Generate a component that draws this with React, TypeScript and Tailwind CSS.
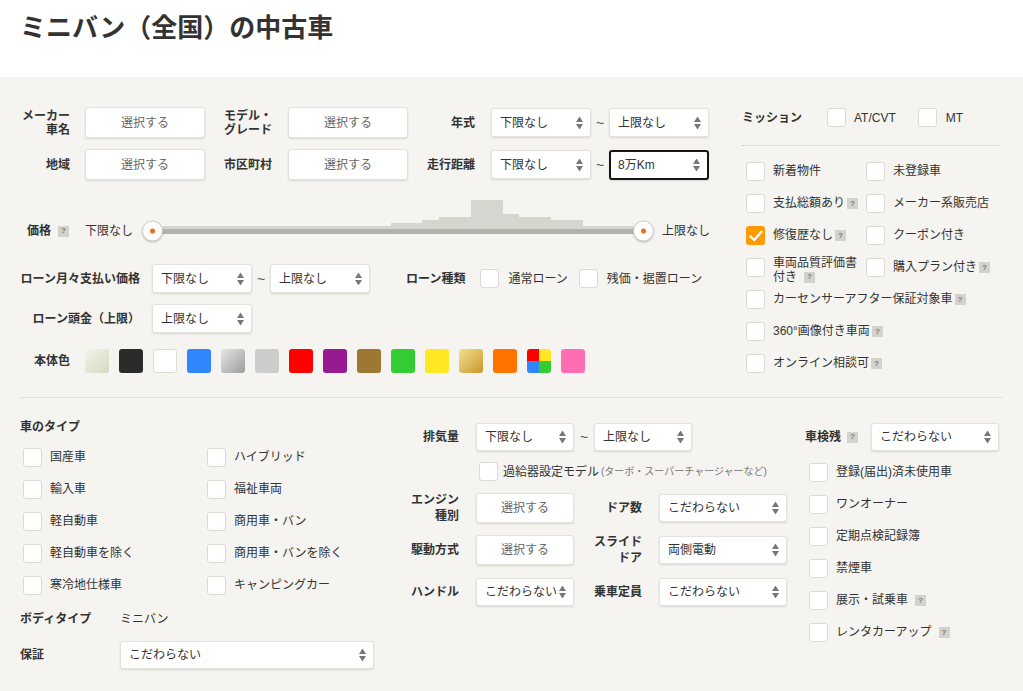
import React from "react";

const FONT = "font-['Liberation_Sans','Noto_Sans_CJK_JP',sans-serif]";

function Lbl({ children, className = "" }: { children: React.ReactNode; className?: string }) {
  return (
    <span className={"whitespace-nowrap text-[12px] font-bold text-[#333] leading-[14px] " + className}>{children}</span>
  );
}

function Q({ className = "" }: { className?: string }) {
  return (
    <span
      className={
        "inline-flex shrink-0 items-center justify-center w-[11px] h-[11px] bg-[#d4d2cd] text-[#7a7a7a] text-[8px] font-bold leading-none " +
        className
      }
    >
      ?
    </span>
  );
}

function Arrows() {
  return (
    <svg width="7" height="13" viewBox="0 0 7 13" className="absolute right-[7px] top-1/2 -translate-y-1/2">
      <path d="M0 5.5L3.5 0L7 5.5Z M0 7.5L7 7.5L3.5 13Z" fill="#777" />
    </svg>
  );
}

function Select({ text, className = "", focus = false }: { text: string; className?: string; focus?: boolean }) {
  return (
    <div
      className={
        "relative shrink-0 flex items-center bg-white rounded-[3px] text-[12px] text-[#333] leading-none shadow-[0_1px_2px_rgba(0,0,0,0.13)] " +
        (focus ? "border-2 border-[#161616] pl-[7px] " : "border border-[#e4e2dd] pl-[8px] ") +
        className
      }
    >
      <span className="whitespace-nowrap">{text}</span>
      <Arrows />
    </div>
  );
}

function Btn({ className = "" }: { className?: string }) {
  return (
    <div
      className={
        "shrink-0 flex items-center justify-center bg-white rounded-[3px] border border-[#e4e2dd] shadow-[0_1px_2px_rgba(0,0,0,0.12)] text-[12px] text-[#666] " +
        className
      }
    >
      選択する
    </div>
  );
}

function Box({ className = "", checked = false }: { className?: string; checked?: boolean }) {
  if (checked) {
    return (
      <span className={"shrink-0 w-[19px] h-[19px] rounded-[3px] bg-[#ff9a00] flex items-center justify-center " + className}>
        <svg width="14" height="12" viewBox="0 0 14 12">
          <path d="M1.5 6.5L5.2 10L12.5 1.8" fill="none" stroke="#fff" strokeWidth="2.4" strokeLinecap="round" strokeLinejoin="round" />
        </svg>
      </span>
    );
  }
  return <span className={"shrink-0 w-[19px] h-[19px] rounded-[3px] bg-white border border-[#dcdad5] " + className} />;
}

function Check({
  label,
  q = false,
  qGap = false,
  checked = false,
  className = "",
}: {
  label: string;
  q?: boolean;
  qGap?: boolean;
  checked?: boolean;
  className?: string;
}) {
  return (
    <div className={"flex items-start " + className}>
      <Box checked={checked} />
      <span className="ml-[8px] flex items-center h-[19px] whitespace-nowrap text-[12px] text-[#333] leading-[19px]">
        {label}
        {q && <Q className={qGap ? "ml-[7px]" : "ml-[2px]"} />}
      </span>
    </div>
  );
}

function Tilde({ className = "w-[18px]" }: { className?: string }) {
  return <span className={"text-center text-[14px] text-[#555] leading-none " + className}>~</span>;
}

function Histogram() {
  return (
    <svg width="471" height="29" viewBox="0 0 471 29" className="absolute left-[21px] bottom-[14px]">
      <path
        d="M0 26H228V23H259V20H276V17H308V0H340V14H356V17H388V20H420V26H471V29H0Z"
        fill="#d7d5d0"
      />
    </svg>
  );
}

function Knob({ className = "" }: { className?: string }) {
  return (
    <span
      className={
        "absolute top-1/2 -translate-y-1/2 w-[21px] h-[21px] rounded-full bg-white border border-[#cfcdc8] shadow-[0_1px_2px_rgba(0,0,0,0.2)] flex items-center justify-center " +
        className
      }
    >
      <span className="w-[5px] h-[5px] rounded-full bg-[#f26a1b]" />
    </span>
  );
}

const SWATCHES = [
  "bg-[linear-gradient(135deg,#f3f3ea,#d8d8bf)]",
  "bg-[#2b2b2b]",
  "bg-white border border-[#dddbd6]",
  "bg-[#2f86ff]",
  "bg-[linear-gradient(135deg,#e6e6e6,#9d9d9d)]",
  "bg-[#cccccc]",
  "bg-[#ff0000]",
  "bg-[#951b8e]",
  "bg-[#9e7732]",
  "bg-[#33cc33]",
  "bg-[#ffe823]",
  "bg-[linear-gradient(135deg,#f5df8e,#c7982c)]",
  "bg-[#ff7300]",
  "multi",
  "bg-[#ff6eb4]",
];

export default function App() {
  return (
    <div className={"min-h-screen bg-[#f5f4f0] " + FONT}>
      <header className="bg-white h-[77px] pl-[20px] pt-[12px]">
        <h1 className="text-[26px] font-bold leading-[32px] text-[#333]">ミニバン（全国）の中古車</h1>
      </header>

      <div className="px-[20px]">
        <div className="flex items-start pt-[30px]">
          {/* top left */}
          <div className="w-[722px] shrink-0">
            <div className="flex items-center h-[31px]">
              <Lbl className="w-[50px] text-right">
                メーカー
                <br />
                車名
              </Lbl>
              <Btn className="ml-[15px] w-[120px] h-[31px]" />
              <Lbl className="ml-[19px] w-[48px]">
                モデル・
                <br />
                グレード
              </Lbl>
              <Btn className="ml-[16px] w-[120px] h-[31px]" />
              <Lbl className="w-[67px] text-right">年式</Lbl>
              <Select className="ml-[16px] w-[100px] h-[29px]" text="下限なし" />
              <Tilde />
              <Select className="w-[100px] h-[29px]" text="上限なし" />
            </div>
            <div className="flex items-center h-[31px] mt-[11px]">
              <Lbl className="w-[50px] text-right">地域</Lbl>
              <Btn className="ml-[15px] w-[120px] h-[31px]" />
              <Lbl className="ml-[19px] w-[48px]">市区町村</Lbl>
              <Btn className="ml-[16px] w-[120px] h-[31px]" />
              <Lbl className="w-[67px] text-right">走行距離</Lbl>
              <Select className="ml-[16px] w-[100px] h-[29px]" text="下限なし" />
              <Tilde />
              <Select className="w-[100px] h-[30px]" text="8万Km" focus />
            </div>

            {/* price slider */}
            <div className="flex items-center h-[24px] mt-[39px]">
              <div className="w-[65px] flex items-center pl-[7px]">
                <Lbl>価格</Lbl>
                <Q className="ml-[7px]" />
              </div>
              <span className="w-[47px] whitespace-nowrap text-[12px] text-[#333]">下限なし</span>
              <div className="relative ml-[10px] w-[512px] h-[24px] flex items-center">
                <Histogram />
                <div className="mx-[11px] h-[5px] flex-1 bg-[#b3b1ab]" />
                <Knob className="left-0" />
                <Knob className="right-0" />
              </div>
              <span className="ml-[8px] whitespace-nowrap text-[12px] text-[#333]">上限なし</span>
            </div>

            {/* loan */}
            <div className="flex items-center h-[29px] mt-[21px]">
              <Lbl className="w-[120px] text-right">ローン月々支払い価格</Lbl>
              <Select className="ml-[12px] w-[100px] h-[29px]" text="下限なし" />
              <Tilde />
              <Select className="w-[100px] h-[29px]" text="上限なし" />
              <Lbl className="ml-[36px]">ローン種類</Lbl>
              <Box className="ml-[15px]" />
              <span className="ml-[9px] whitespace-nowrap text-[12px] text-[#333]">通常ローン</span>
              <Box className="ml-[11px]" />
              <span className="ml-[9px] whitespace-nowrap text-[12px] text-[#333]">残価・据置ローン</span>
            </div>
            <div className="flex items-center h-[29px] mt-[11px]">
              <Lbl className="w-[120px] text-right">ローン頭金（上限）</Lbl>
              <Select className="ml-[12px] w-[100px] h-[29px]" text="上限なし" />
            </div>

            {/* colours */}
            <div className="flex items-center mt-[16px]">
              <Lbl className="w-[50px] text-right">本体色</Lbl>
              <div className="ml-[15px] flex gap-[10px]">
                {SWATCHES.map((s, i) =>
                  s === "multi" ? (
                    <span key={i} className="w-[24px] h-[24px] rounded-[3px] overflow-hidden grid grid-cols-2 grid-rows-2">
                      <span className="bg-[#ff0000]" />
                      <span className="bg-[#ffe823]" />
                      <span className="bg-[#2f86ff]" />
                      <span className="bg-[#33cc33]" />
                    </span>
                  ) : (
                    <span key={i} className={"w-[24px] h-[24px] rounded-[3px] " + s} />
                  )
                )}
              </div>
            </div>
          </div>

          {/* top right */}
          <div className="w-[258px]">
            <div className="flex items-center h-[19px] mt-[1px]">
              <Lbl className="w-[85px]">ミッション</Lbl>
              <Box />
              <span className="ml-[8px] text-[12px] text-[#333]">AT/CVT</span>
              <Box className="ml-[22px]" />
              <span className="ml-[9px] text-[12px] text-[#333]">MT</span>
            </div>
            <div className="mt-[18px] border-t border-dotted border-[#cfcdc8]" />
            <div className="mt-[16px] pl-[4px] flex flex-col gap-[13px]">
              <div className="flex">
                <Check className="w-[120px]" label="新着物件" />
                <Check label="未登録車" />
              </div>
              <div className="flex">
                <Check className="w-[120px]" label="支払総額あり" q />
                <Check label="メーカー系販売店" />
              </div>
              <div className="flex">
                <Check className="w-[120px]" label="修復歴なし" q checked />
                <Check label="クーポン付き" />
              </div>
              <div className="flex h-[19px]">
                <div className="flex items-start w-[120px]">
                  <Box />
                  <span className="ml-[8px] text-[12px] text-[#333] leading-[14px] -mt-[2px] whitespace-nowrap">
                    車両品質評価書
                    <span className="flex items-center">
                      付き
                      <Q className="ml-[7px]" />
                    </span>
                  </span>
                </div>
                <Check label="購入プラン付き" q />
              </div>
              <Check label="カーセンサーアフター保証対象車" q />
              <Check label="360°画像付き車両" q />
              <Check label="オンライン相談可" q />
            </div>
          </div>
        </div>

        <div className="border-t border-[#e3e1dc] mt-[24px]" />

        <div className="flex pt-[20px]">
          {/* bottom left */}
          <div className="w-[380px] shrink-0">
            <Lbl className="block leading-[19px]">車のタイプ</Lbl>
            <div className="mt-[11px] pl-[3px] grid grid-cols-[184px_184px] gap-y-[13px]">
              <Check label="国産車" />
              <Check label="ハイブリッド" />
              <Check label="輸入車" />
              <Check label="福祉車両" />
              <Check label="軽自動車" />
              <Check label="商用車・バン" />
              <Check label="軽自動車を除く" />
              <Check label="商用車・バンを除く" />
              <Check label="寒冷地仕様車" />
              <Check label="キャンピングカー" />
            </div>
            <div className="flex items-center h-[19px] mt-[14px]">
              <Lbl className="w-[100px]">ボディタイプ</Lbl>
              <span className="text-[12px] text-[#333]">ミニバン</span>
            </div>
            <div className="flex items-center mt-[13px]">
              <Lbl className="w-[100px]">保証</Lbl>
              <Select className="w-[254px] h-[28px]" text="こだわらない" />
            </div>
          </div>

          {/* bottom middle */}
          <div className="w-[405px] shrink-0 mt-[5px]">
            <div className="flex items-center h-[28px]">
              <Lbl className="w-[59px] text-right">排気量</Lbl>
              <Select className="ml-[17px] w-[98px] h-[28px]" text="下限なし" />
              <Tilde className="w-[20px]" />
              <Select className="w-[98px] h-[28px]" text="上限なし" />
            </div>
            <div className="flex items-center h-[19px] mt-[11px] pl-[79px]">
              <Box />
              <span className="ml-[5px] whitespace-nowrap text-[12px] text-[#333]">過給器設定モデル</span>
              <span className="ml-[2px] whitespace-nowrap text-[10px] text-[#777]">(ターボ・スーパーチャージャーなど)</span>
            </div>
            <div className="flex items-center h-[30px] mt-[12px]">
              <Lbl className="w-[59px] text-right leading-[16px]">
                エンジン
                <br />
                種別
              </Lbl>
              <Btn className="ml-[17px] w-[98px] h-[30px]" />
              <Lbl className="w-[68px] text-right">ドア数</Lbl>
              <Select className="ml-[17px] w-[128px] h-[28px]" text="こだわらない" />
            </div>
            <div className="flex items-center h-[30px] mt-[12px]">
              <Lbl className="w-[59px] text-right">駆動方式</Lbl>
              <Btn className="ml-[17px] w-[98px] h-[30px]" />
              <Lbl className="w-[68px] text-right leading-[16px]">
                スライド
                <br />
                ドア
              </Lbl>
              <Select className="ml-[17px] w-[128px] h-[28px]" text="両側電動" />
            </div>
            <div className="flex items-center h-[30px] mt-[12px]">
              <Lbl className="w-[59px] text-right">ハンドル</Lbl>
              <Select className="ml-[17px] w-[98px] h-[28px]" text="こだわらない" />
              <Lbl className="w-[68px] text-right">乗車定員</Lbl>
              <Select className="ml-[17px] w-[128px] h-[28px]" text="こだわらない" />
            </div>
          </div>

          {/* bottom right */}
          <div className="mt-[5px]">
            <div className="flex items-center h-[28px]">
              <Lbl>車検残</Lbl>
              <Q className="ml-[6px]" />
              <Select className="ml-[13px] w-[128px] h-[28px]" text="こだわらない" />
            </div>
            <div className="mt-[12px] pl-[4px] flex flex-col gap-[13px]">
              <Check label="登録(届出)済未使用車" />
              <Check label="ワンオーナー" />
              <Check label="定期点検記録簿" />
              <Check label="禁煙車" />
              <Check label="展示・試乗車" q qGap />
              <Check label="レンタカーアップ" q qGap />
            </div>
          </div>
        </div>
        <div className="h-[20px]" />
      </div>
    </div>
  );
}
